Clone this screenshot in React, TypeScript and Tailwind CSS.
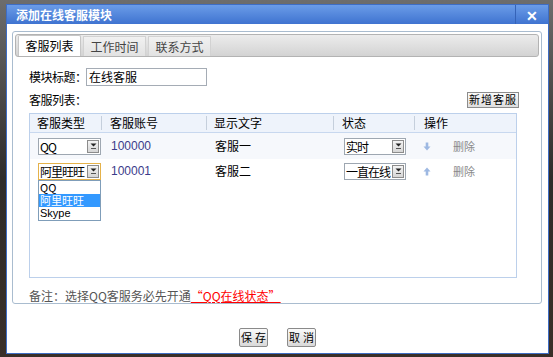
import React from 'react'

const cjk = "font-['SimSun','Noto_Sans_CJK_SC',sans-serif]"

function Select({ value, width, focus }: { value: string; width: string; focus?: boolean }) {
  return (
    <div
      className={`flex h-[17px] items-stretch bg-white ${width} border ${
        focus ? 'border-[#e5b24a]' : 'border-[#9ea7b1]'
      }`}
    >
      <span className="flex-1 overflow-hidden whitespace-nowrap pl-[1px] text-[12px] leading-[15px] tracking-[-1px] text-black">
        {value}
      </span>
      <span className="m-[1px] flex w-[12px] items-center justify-center border border-[#8c8c8c] bg-gradient-to-b from-[#f4f4f4] to-[#d6d6d6]">
        <svg width="7" height="6" viewBox="0 0 7 6">
          <path d="M0.5 0.5h6L3.5 3.5z" fill="#222" />
          <path d="M1 5.5h5" stroke="#555" strokeWidth="1" />
        </svg>
      </span>
    </div>
  )
}

function Arrow({ up }: { up?: boolean }) {
  return (
    <svg width="8" height="9" viewBox="0 0 8 9">
      {up ? (
        <path d="M4 0.5L7.5 4.5H5.3V8.5H2.7V4.5H0.5Z" fill="#9db8e2" />
      ) : (
        <path d="M4 8.5L7.5 4.5H5.3V0.5H2.7V4.5H0.5Z" fill="#9db8e2" />
      )}
    </svg>
  )
}

function Btn({ a, b }: { a: string; b: string }) {
  return (
    <div className="flex h-[19px] w-[29px] items-center justify-center gap-[3px] whitespace-nowrap rounded-[2px] border border-[#8a8a8a] bg-gradient-to-b from-[#fafafa] to-[#d9d9d9] text-[11px] leading-none text-black">
      <span>{a}</span>
      <span>{b}</span>
    </div>
  )
}

export default function App() {
  const rows = [
    { type: 'QQ', account: '100000', text: '客服一', status: '实时', up: false, bg: 'bg-[#f6f8fc]', h: 'h-[26px]' },
    { type: '阿里旺旺', account: '100001', text: '客服二', status: '一直在线', up: true, bg: 'bg-white', h: 'h-[24px]' },
  ]

  return (
    <div className={`h-[357px] w-[553px] overflow-hidden bg-gradient-to-b from-[#6d6d6d] via-[#2f2c2a] to-[#3a2f28] pl-[6px] pt-[4px] ${cjk}`}>
      <div className="flex h-[350px] w-[543px] flex-col border border-[#3e6dc4] bg-white">
        {/* title bar */}
        <div className="flex h-[19px] items-stretch bg-gradient-to-b from-[#6b9ce8] to-[#3f73d0]">
          <div className="flex flex-1 items-center pl-[9px] text-[12px] font-bold text-white">添加在线客服模块</div>
          <div className="flex w-[33px] items-center justify-center border-l border-[#3563b8] text-[14px] font-bold leading-none text-white">
            ✕
          </div>
        </div>

        <div className="flex flex-1 flex-col">
          {/* panel */}
          <div className="ml-[5px] mt-[7px] flex h-[273px] w-[530px] flex-col rounded-[3px] border border-[#a9bccf] p-[2px]">
            {/* tabs */}
            <div className="flex h-[23px] shrink-0 items-end gap-[2px] rounded-[3px] border border-[#b3b3b3] bg-gradient-to-b from-[#ececec] to-[#d3d3d3] pl-[2px]">
              <div className="flex h-[21px] w-[63px] items-center justify-center rounded-t-[2px] border border-b-0 border-[#c6c6c6] bg-white text-[12px] text-black">
                客服列表
              </div>
              <div className="flex h-[20px] w-[63px] items-center justify-center border border-b-0 border-[#d2d2d2] bg-gradient-to-b from-[#f1f1f1] to-[#e2e2e2] text-[12px] text-[#444]">
                工作时间
              </div>
              <div className="flex h-[20px] w-[63px] items-center justify-center border border-b-0 border-[#d2d2d2] bg-gradient-to-b from-[#f1f1f1] to-[#e2e2e2] text-[12px] text-[#444]">
                联系方式
              </div>
            </div>

            <div className="flex flex-1 flex-col pl-[14px] pr-[22px]">
              <div className="mt-[11px] flex items-center">
                <span className="w-[57px] whitespace-nowrap text-[12px] tracking-[-0.5px] text-black">模块标题：</span>
                <div className="flex h-[18px] w-[121px] items-center border border-[#a5acb5] pl-[2px] text-[12px] text-black">
                  在线客服
                </div>
              </div>

              <div className="mt-[5px] flex h-[17px] items-center justify-between">
                <span className="whitespace-nowrap text-[12px] tracking-[-0.5px] text-black">客服列表：</span>
                <div className="mr-[-2px] flex h-[16px] w-[52px] items-center justify-center whitespace-nowrap border border-[#8c8c8c] bg-gradient-to-b from-[#fafafa] to-[#dedede] text-[11px] leading-none tracking-[1px] text-black">
                  新增客服
                </div>
              </div>

              {/* table */}
              <div className="mt-[5px] h-[165px] shrink-0 border border-[#bcd0eb]">
                <div className="grid h-[19px] grid-cols-[72px_105px_127px_81px_1fr] items-center border-b border-[#c8d8ef] bg-[#eef3fb] text-[12px] text-black">
                  <div className="border-r border-[#c5cfdc] pl-[7px] leading-[14px]">客服类型</div>
                  <div className="border-r border-[#c5cfdc] pl-[8px] leading-[14px]">客服账号</div>
                  <div className="border-r border-[#c5cfdc] pl-[7px] leading-[14px]">显示文字</div>
                  <div className="border-r border-[#c5cfdc] pl-[8px] leading-[14px]">状态</div>
                  <div className="pl-[9px] leading-[14px]">操作</div>
                </div>
                {rows.map((r, i) => (
                  <div
                    key={r.account}
                    className={`relative grid ${r.h} grid-cols-[72px_105px_127px_81px_1fr] items-center text-[12px] ${r.bg}`}
                  >
                    <div className="relative pl-[8px]">
                      <Select value={r.type} width="w-[63px]" focus={i === 1} />
                      {i === 1 && (
                        <div className="absolute left-[8px] top-[17px] z-10 w-[63px] border border-[#7f9db9] bg-white text-[11px] text-black">
                          <div className="h-[13px] pl-[1px] leading-[13px]">QQ</div>
                          <div className="h-[13px] bg-[#3399ff] pl-[1px] leading-[13px] text-white">阿里旺旺</div>
                          <div className="h-[13px] pl-[1px] font-['Liberation_Sans',sans-serif] leading-[13px]">Skype</div>
                        </div>
                      )}
                    </div>
                    <div className="pl-[9px] font-['Liberation_Sans',sans-serif] text-[12px] text-[#3b3b8a]">{r.account}</div>
                    <div className="pl-[8px] text-black">{r.text}</div>
                    <div className="pl-[10px]">
                      <Select value={r.status} width="w-[62px]" />
                    </div>
                    <div className="flex items-center pl-[8px]">
                      <Arrow up={r.up} />
                      <span className="ml-[22px] text-[11px] text-[#8a8a8a]">删除</span>
                    </div>
                  </div>
                ))}
              </div>

              <div className="mt-[11px] whitespace-nowrap text-[12px] leading-[14px] text-[#555]">
                备注：选择QQ客服务必先开通<span className="text-[#ff0000] underline">“QQ在线状态”</span>
              </div>
            </div>
          </div>

          {/* buttons */}
          <div className="mt-[24px] flex justify-center gap-[19px]">
            <Btn a="保" b="存" />
            <Btn a="取" b="消" />
          </div>
        </div>
      </div>
    </div>
  )
}
